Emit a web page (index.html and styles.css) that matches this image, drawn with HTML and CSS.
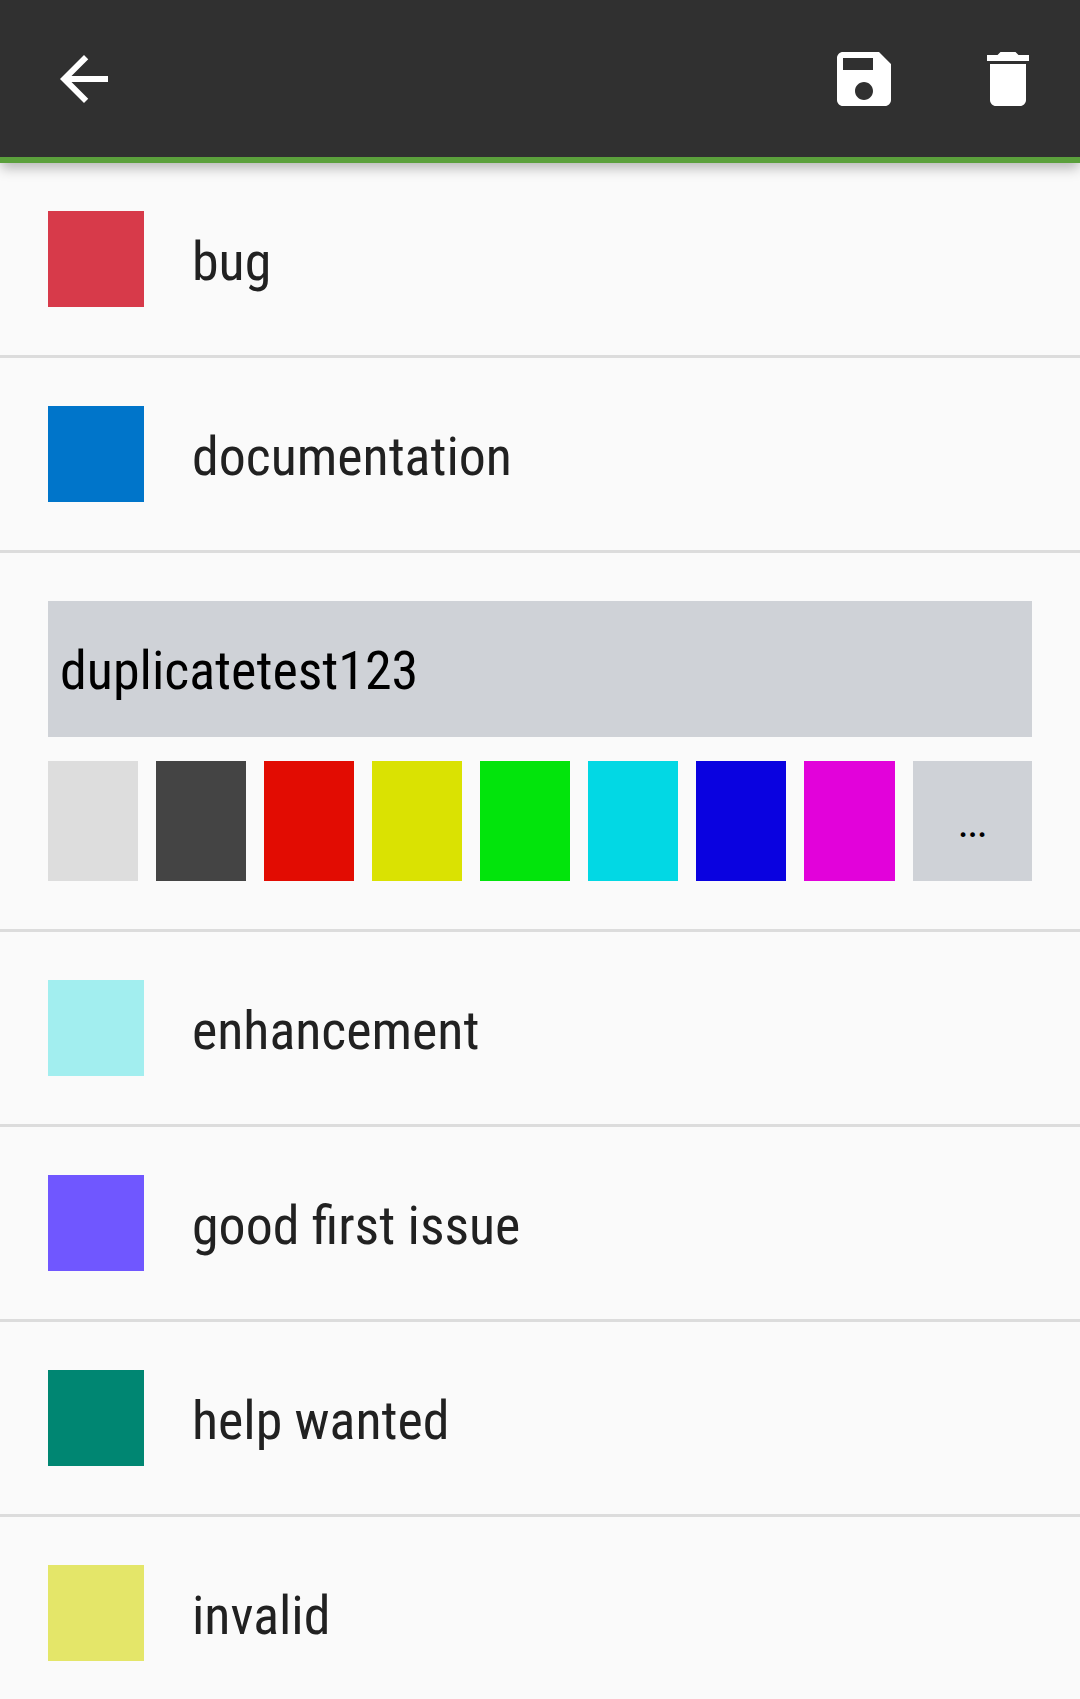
FILE: index.html
```html
<!DOCTYPE html>
<html lang="en">
<head>
<meta charset="utf-8">
<title>Labels</title>
<link rel="stylesheet" href="styles.css">
</head>
<body>
<header class="toolbar">
  <svg class="icon" viewBox="0 0 24 24"><path d="M20 11H7.830l5.590-5.590L12 4l-8 8 8 8 1.410-1.410L7.830 13H20v-2z"/></svg>
  <span class="spacer"></span>
  <svg class="icon save" viewBox="0 0 24 24"><path d="M17 3H5c-1.110 0-2 .9-2 2v14c0 1.100.89 2 2 2h14c1.100 0 2-.9 2-2V7l-4-4zm-5 16c-1.660 0-3-1.340-3-3s1.340-3 3-3 3 1.340 3 3-1.340 3-3 3zm3-10H5V5h10v4z"/></svg>
  <svg class="icon" viewBox="0 0 24 24"><path d="M6 19c0 1.100.9 2 2 2h8c1.100 0 2-.9 2-2V7H6v12zM19 4h-3.500l-1-1h-5l-1 1H5v2h14V4z"/></svg>
</header>
<main class="list">
  <div class="row"><i class="swatch bug"></i><span class="label">bug</span></div>
  <div class="row"><i class="swatch documentation"></i><span class="label">documentation</span></div>
  <section class="editor">
    <div class="field">duplicatetest123</div>
    <div class="palette">
      <i class="light"></i><i class="dark"></i><i class="red"></i><i class="yellow"></i>
      <i class="green"></i><i class="cyan"></i><i class="blue"></i><i class="magenta"></i>
      <button class="more">...</button>
    </div>
  </section>
  <div class="row"><i class="swatch enhancement"></i><span class="label">enhancement</span></div>
  <div class="row"><i class="swatch first"></i><span class="label">good first issue</span></div>
  <div class="row"><i class="swatch help"></i><span class="label">help wanted</span></div>
  <div class="row"><i class="swatch invalid"></i><span class="label">invalid</span></div>
</main>
</body>
</html>
```

FILE: styles.css
```css
* { box-sizing: border-box; }
body {
  margin: 0;
  height: 1699px;
  overflow: hidden;
  background: #fafafa;
  color: #212121;
  font-family: "Roboto Condensed", Roboto, sans-serif;
  font-stretch: 75%;
  font-size: 54px;
}
.toolbar {
  height: 163px;
  padding: 0 36px 0 48px;
  display: flex;
  align-items: center;
  background: #303030;
  border-bottom: 6px solid #5ba03c;
  box-shadow: 0 6px 12px -1px rgba(0, 0, 0, .28);
}
.icon { width: 72px; height: 72px; fill: #fff; }
.save { margin-right: 72px; }
.spacer { flex: 1; }
.row {
  height: 195px;
  padding: 0 48px;
  display: flex;
  align-items: center;
  gap: 48px;
  border-bottom: 3px solid #dcdcdc;
}
.label { padding-top: 4px; font-size: 53.9px; }
.swatch { width: 96px; height: 96px; }
.bug { background: #d73a4a; }
.documentation { background: #0075ca; }
.enhancement { background: #a2eeef; }
.first { background: #7057ff; }
.help { background: #008672; }
.invalid { background: #e4e669; }
.editor {
  padding: 48px;
  display: grid;
  gap: 24px;
  border-bottom: 3px solid #dcdcdc;
}
.field {
  height: 136px;
  padding: 2px 12px 0;
  display: flex;
  align-items: center;
  background: #cfd2d7;
  color: #000;
}
.palette {
  height: 120px;
  display: grid;
  grid-template-columns: repeat(7, 90px) 91px 119px;
  column-gap: 18px;
}
.light { background: #ddd; }
.dark { background: #444; }
.red { background: #e20c02; }
.yellow { background: #dae202; }
.green { background: #02e40c; }
.cyan { background: #02d8e4; }
.blue { background: #0a02e0; }
.magenta { background: #e202da; }
.more {
  padding: 2px 1px 0 0;
  border: 0;
  background: #cfd2d7;
  color: #000;
  font: inherit;
  font-stretch: 75%;
  font-size: 42px;
  letter-spacing: -1.500px;
}
```
